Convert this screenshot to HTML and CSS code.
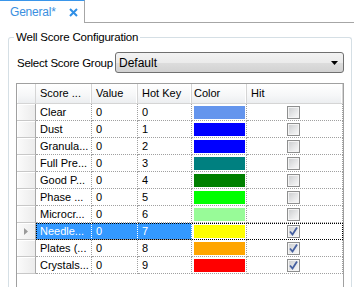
FILE: index.html
```html
<!DOCTYPE html>
<html>
<head>
<meta charset="utf-8">
<link rel="stylesheet" href="styles.css">
</head>
<body>
<div class="tabstrip">
  <div class="tab">
    <span class="tab-title">General*</span>
    <svg class="tab-close" width="9" height="9" viewBox="0 0 9 9"><path d="M1 1 L8 8 M8 1 L1 8" stroke="#2f8fe6" stroke-width="2" fill="none"/></svg>
  </div>
  <div class="tab-fill"></div>
</div>
<fieldset class="group">
  <legend class="group-title">Well Score Configuration</legend>
  <div class="select-row">
    <span class="select-label">Select Score Group</span>
    <div class="combo">
      <span class="combo-text">Default</span>
      <svg class="combo-arrow" width="7" height="4" viewBox="0 0 7 4"><path d="M0 0 H7 L3.5 4 Z" fill="#000"/></svg>
    </div>
  </div>
  <div class="grid">
    <div class="row head">
      <div class="rh"></div>
      <div class="cells">
        <div class="c score">Score ...</div>
        <div class="c value">Value</div>
        <div class="c hotkey">Hot Key</div>
        <div class="c color">Color</div>
        <div class="c hit">Hit</div>
      </div>
    </div>

    <div class="row"><div class="rh"></div><div class="cells">
      <div class="c score">Clear</div><div class="c value">0</div><div class="c hotkey">0</div>
      <div class="c color"><span class="swatch sw-cornflower"></span></div>
      <div class="c hit"><span class="chk"></span></div></div></div>

    <div class="row"><div class="rh"></div><div class="cells">
      <div class="c score">Dust</div><div class="c value">0</div><div class="c hotkey">1</div>
      <div class="c color"><span class="swatch sw-blue"></span></div>
      <div class="c hit"><span class="chk"></span></div></div></div>

    <div class="row"><div class="rh"></div><div class="cells">
      <div class="c score">Granula...</div><div class="c value">0</div><div class="c hotkey">2</div>
      <div class="c color"><span class="swatch sw-blue"></span></div>
      <div class="c hit"><span class="chk"></span></div></div></div>

    <div class="row"><div class="rh"></div><div class="cells">
      <div class="c score">Full Pre...</div><div class="c value">0</div><div class="c hotkey">3</div>
      <div class="c color"><span class="swatch sw-teal"></span></div>
      <div class="c hit"><span class="chk"></span></div></div></div>

    <div class="row"><div class="rh"></div><div class="cells">
      <div class="c score">Good P...</div><div class="c value">0</div><div class="c hotkey">4</div>
      <div class="c color"><span class="swatch sw-green"></span></div>
      <div class="c hit"><span class="chk"></span></div></div></div>

    <div class="row"><div class="rh"></div><div class="cells">
      <div class="c score">Phase ...</div><div class="c value">0</div><div class="c hotkey">5</div>
      <div class="c color"><span class="swatch sw-lime"></span></div>
      <div class="c hit"><span class="chk"></span></div></div></div>

    <div class="row"><div class="rh"></div><div class="cells">
      <div class="c score">Microcr...</div><div class="c value">0</div><div class="c hotkey">6</div>
      <div class="c color"><span class="swatch sw-palegreen"></span></div>
      <div class="c hit"><span class="chk"></span></div></div></div>

    <div class="row selected"><div class="rh"><svg class="current" width="4" height="7" viewBox="0 0 4 7"><path d="M0 0 L4 3.5 L0 7 Z" fill="#9a9a9a"/></svg></div><div class="cells">
      <div class="c score">Needle...</div><div class="c value">0</div><div class="c hotkey">7</div>
      <div class="c color"><span class="swatch sw-yellow"></span></div>
      <div class="c hit"><span class="chk checked"><svg width="11" height="11" viewBox="0 0 11 11"><path d="M2 5.5 L4.5 8.5 L9 1.5" stroke="#4660a0" stroke-width="1.8" fill="none"/></svg></span></div></div></div>

    <div class="row"><div class="rh"></div><div class="cells">
      <div class="c score">Plates (...</div><div class="c value">0</div><div class="c hotkey">8</div>
      <div class="c color"><span class="swatch sw-orange"></span></div>
      <div class="c hit"><span class="chk checked"><svg width="11" height="11" viewBox="0 0 11 11"><path d="M2 5.5 L4.5 8.5 L9 1.5" stroke="#4660a0" stroke-width="1.8" fill="none"/></svg></span></div></div></div>

    <div class="row"><div class="rh"></div><div class="cells">
      <div class="c score">Crystals...</div><div class="c value">0</div><div class="c hotkey">9</div>
      <div class="c color"><span class="swatch sw-red"></span></div>
      <div class="c hit"><span class="chk checked"><svg width="11" height="11" viewBox="0 0 11 11"><path d="M2 5.5 L4.5 8.5 L9 1.5" stroke="#4660a0" stroke-width="1.8" fill="none"/></svg></span></div></div></div>
  </div>
</fieldset>
</body>
</html>
```
FILE: styles.css
```css
html, body {
  margin: 0;
  padding: 0;
  background: #ffffff;
  overflow: hidden;
  width: 354px;
  height: 287px;
}
body {
  font-family: "Liberation Sans", Arial, sans-serif;
  font-size: 11px;
  color: #000;
  display: flex;
  flex-direction: column;
}

/* tabs */
.tabstrip {
  display: flex;
  height: 23px;
  flex: none;
}
.tab {
  box-sizing: border-box;
  width: 85px;
  height: 23px;
  border-top: 1px solid #3a96ea;
  border-right: 1px solid #a6a6a6;
  background: #fff;
  display: flex;
  align-items: center;
  padding-left: 10px;
  padding-bottom: 1px;
}
.tab-title {
  color: #3a8fe0;
  font-size: 12px;
  line-height: 14px;
  letter-spacing: -0.2px;
}
.tab-close {
  margin-left: 13px;
  margin-top: 1px;
}
.tab-fill {
  flex: 1;
  box-sizing: border-box;
  height: 23px;
  border-bottom: 1px solid #a6a6a6;
}

/* group box */
.group {
  flex: 1;
  min-height: 0;
  min-width: 0;
  margin: 7px 2px 0 8px;
  padding: 0 6px 0 5px;
  border: 1px solid #d5dfe5;
  border-bottom: 0;
  border-radius: 3px 3px 0 0;
  display: flex;
  flex-direction: column;
}
.group-title {
  padding: 0 2px;
  font-size: 11.5px;
  line-height: 15px;
  letter-spacing: -0.2px;
  color: #000;
}

.select-row {
  display: flex;
  align-items: center;
  margin: 7px 1px 0 3px;
  height: 21px;
  flex: none;
}
.select-label {
  font-size: 11.5px;
  letter-spacing: -0.25px;
  white-space: nowrap;
  width: 98px;
  flex: none;
}
.combo {
  flex: 1;
  box-sizing: border-box;
  height: 21px;
  border: 1px solid #707070;
  border-radius: 3px;
  background: linear-gradient(#f3f3f3 0%, #ebebeb 50%, #dddddd 51%, #d2d2d2 100%);
  display: flex;
  align-items: center;
  padding: 0 5px 0 3px;
}
.combo-text {
  flex: 1;
  font-size: 12px;
}
.combo-arrow {
  margin-top: 1px;
}

/* grid */
.grid {
  flex: 1;
  min-height: 0;
  overflow: hidden;
  margin: 10px 1px 0 2px;
  border: 1px solid #a0a0a0;
  border-bottom: 0;
  background: #fff;
}
.row {
  display: flex;
  height: 17px;
}
.row.head {
  height: 20px;
}
.rh {
  box-sizing: border-box;
  width: 19px;
  flex: none;
  background: linear-gradient(to right, #fbfbfb, #ececec);
  border-right: 1px solid #a8a8a8;
  border-bottom: 1px solid #c8c8c8;
  box-shadow: inset 1px 1px 0 #ffffff;
  display: flex;
  align-items: center;
  padding-left: 7px;
}
.head .rh {
  background: linear-gradient(#ffffff, #f6f7f8 60%, #eceef0);
  border-right: 1px solid #d5d5d5;
  border-bottom: 1px solid #d5d5d5;
}
.cells {
  display: flex;
}
.c {
  box-sizing: border-box;
  height: 17px;
  line-height: 16px;
  padding-left: 4px;
  border-right: 1px dotted #a0a0a0;
  border-bottom: 1px dotted #a0a0a0;
  white-space: nowrap;
  overflow: hidden;
}
.score { width: 56px; }
.value { width: 46px; }
.hotkey { width: 54px; }
.color { width: 55px; padding-left: 2px; }
.hit { width: 96px; padding-left: 40px; }

.head .c {
  height: 20px;
  line-height: 19px;
  background: linear-gradient(#ffffff, #f6f7f8 60%, #eceef0);
  border-right: 1px solid #d5d5d5;
  border-bottom: 1px solid #d5d5d5;
  box-shadow: inset -1px 0 0 #ffffff;
}
.head .hit {
  padding-left: 4px;
  border-right: 1px solid #d5d5d5;
}

.selected .cells {
  outline: 1px dotted #000;
  outline-offset: -1px;
}
.selected .score,
.selected .value,
.selected .hotkey {
  background: #3399ff;
  color: #fff;
  border-right-color: #ffffff;
}

.swatch {
  display: block;
  width: 51px;
  height: 13px;
  margin-top: 2px;
}
.sw-cornflower { background: #6495ed; }
.sw-blue { background: #0000ff; }
.sw-teal { background: #008080; }
.sw-green { background: #008000; }
.sw-lime { background: #00ff00; }
.sw-palegreen { background: #98fb98; }
.sw-yellow { background: #ffff00; }
.sw-orange { background: #ffa500; }
.sw-red { background: #ff0000; }

.chk {
  display: block;
  box-sizing: border-box;
  width: 13px;
  height: 13px;
  margin-top: 2px;
  border: 1px solid #8e8f8f;
  background: linear-gradient(135deg, #c9cbcd 0%, #e6e7e8 55%, #fbfbfb 100%);
  box-shadow: inset 0 0 0 1px #f4f4f4;
}
.chk svg {
  display: block;
}
```
